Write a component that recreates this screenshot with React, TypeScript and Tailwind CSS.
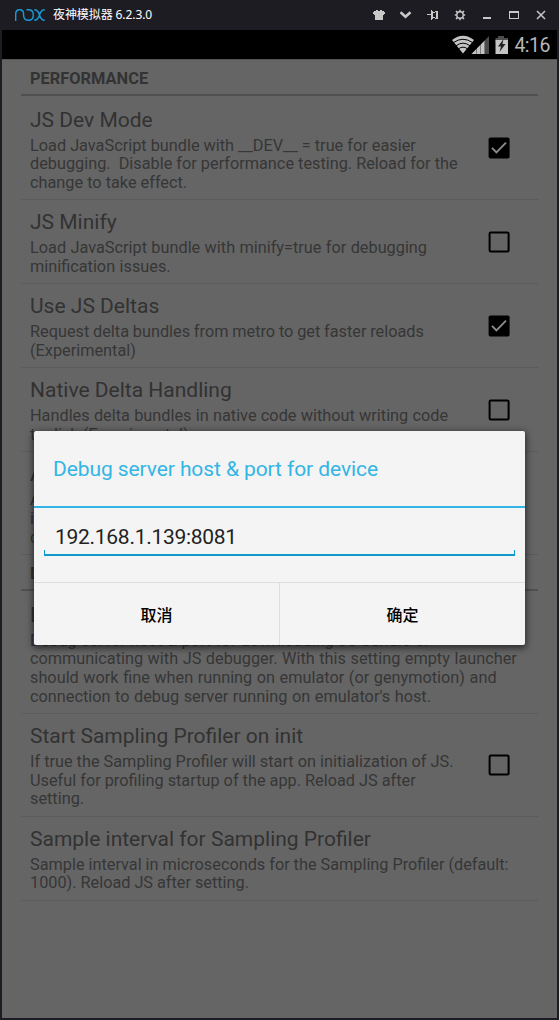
import React from "react";

type Item = {
  title: string;
  lines: string[];
  spacing?: string;
  checked?: boolean;
};

const performance: Item[] = [
  {
    title: "JS Dev Mode",
    lines: [
      "Load JavaScript bundle with __DEV__ = true for easier",
      "debugging.\u00a0 Disable for performance testing. Reload for the",
      "change to take effect.",
    ],
    checked: true,
  },
  {
    title: "JS Minify",
    lines: ["Load JavaScript bundle with minify=true for debugging", "minification issues."],
    spacing: "[word-spacing:0.35px]",
    checked: false,
  },
  {
    title: "Use JS Deltas",
    lines: ["Request delta bundles from metro to get faster reloads", "(Experimental)"],
    spacing: "[word-spacing:-0.25px]",
    checked: true,
  },
  {
    title: "Native Delta Handling",
    lines: ["Handles delta bundles in native code without writing code", "to disk (Experimental)"],
    spacing: "[word-spacing:0.25px]",
    checked: false,
  },
  {
    title: "A",
    lines: ["A", "i", "c"],
  },
];

const debugging: Item[] = [
  {
    title: "Debug server host & port for device",
    lines: [
      "Debug server host & port for downloading JS bundle or",
      "communicating with JS debugger. With this setting empty launcher",
      "should work fine when running on emulator (or genymotion) and",
      "connection to debug server running on emulator's host.",
    ],
    spacing: "[word-spacing:0.5px]",
  },
  {
    title: "Start Sampling Profiler on init",
    lines: [
      "If true the Sampling Profiler will start on initialization of JS.",
      "Useful for profiling startup of the app. Reload JS after",
      "setting.",
    ],
    checked: false,
  },
  {
    title: "Sample interval for Sampling Profiler",
    lines: [
      "Sample interval in microseconds for the Sampling Profiler (default:",
      "1000). Reload JS after setting.",
    ],
    spacing: "[word-spacing:-0.1px]",
  },
];

function CheckBox({ checked }: { checked: boolean }) {
  return (
    <svg width="22" height="22" viewBox="0 0 22 22" className="shrink-0">
      {checked ? (
        <>
          <rect x="0.6" y="0.4" width="21" height="21.2" rx="1.8" fill="#000" />
          <path d="M4 10.8l4.4 4.5L18 5.6" fill="none" stroke="#8b8b8b" strokeWidth="1.9" />
        </>
      ) : (
        <rect x="1.6" y="1.5" width="19" height="19" rx="1.2" fill="none" stroke="#000" strokeWidth="2" />
      )}
    </svg>
  );
}

function Category({ children }: { children: React.ReactNode }) {
  return (
    <div className="mb-[1.6px] flex h-[36px] items-center border-b-2 border-[#505050] pt-[3px] pl-[9px] text-[16.4px] font-bold leading-[19px] text-[#333333]">
      {children}
    </div>
  );
}

function Row({ item }: { item: Item }) {
  return (
    <div className="flex items-center justify-between border-b border-[#5b5b5b] pr-[28px] pl-[9px]">
      <div className="pt-[10px] pb-[6.6px]">
        <div className="text-[21px] leading-[25px] whitespace-nowrap text-[#323232]">{item.title}</div>
        <div
          className={`pt-[4px] text-[16.3px] leading-[18.7px] whitespace-nowrap text-[#363636] ${item.spacing ?? ""}`}
        >
          {item.lines.map((line) => (
            <div key={line}>{line}</div>
          ))}
        </div>
      </div>
      {item.checked !== undefined && <CheckBox checked={item.checked} />}
    </div>
  );
}

function TitleBar() {
  return (
    <header className="flex h-[30px] shrink-0 items-center bg-[#1e1c23] pr-[12px] pl-[15px]">
      <svg width="30" height="12" viewBox="0 0 30 12" fill="none" stroke="#1a9bd8" strokeWidth="1.4">
        <path d="M.7 12V5C.7 2 2 .7 4.6.7S8.600 2 8.600 5v2.200" />
        <path d="M8.600 7.200c.4 2.600 2.200 4.100 4.800 4.100 3.200 0 4.900-2.200 4.900-5.300S16.400.7 13.600.7H11.500" />
        <path d="M19.300.7c3.300 0 4.300 2.100 5.200 5.300s1.700 5.300 5.200 5.300M29.700.7c-3.300 0-4.300 2.100-5.200 5.300s-1.700 5.300-5.200 5.300" />
      </svg>
      <div className="ml-[8px] font-['Noto_Sans','Noto_Sans_CJK_SC',sans-serif] text-[12px] leading-[16px] tracking-[-0.09px] text-white">
        夜神模拟器 6.2.3.0
      </div>
      <div className="ml-auto flex items-center gap-[15px] text-[#c8c8c8]">
        <svg width="12" height="12" viewBox="0 0 12 12" fill="currentColor" shapeRendering="crispEdges">
          <path d="M3 1h2v1h2V1h2v1h2v1h1v2h-1v1h-1v5H2V6H1V5H0V3h1V2h2z" />
        </svg>
        <svg width="12" height="12" viewBox="0 0 12 12" fill="none" stroke="currentColor" strokeWidth="2.600">
          <path d="M.5 3.200l5 4.500 5-4.500" />
        </svg>
        <svg width="12" height="12" viewBox="0 0 12 12" fill="currentColor" shapeRendering="crispEdges">
          <path fillRule="evenodd" d="M0 5h4V1h1v1h1v1h2V2h3v8H8V9H6v1H5v1H4V6H0zM6 4v4h2v1h1V3H8v1z" />
        </svg>
        <svg width="12" height="12" viewBox="0 0 12 12" fill="none" stroke="currentColor">
          <circle cx="6" cy="6" r="3.200" strokeWidth="1.400" />
          <path
            d="M6 .8v2M6 9.200v2M.8 6h2M9.200 6h2M2 2l1.600 1.600M8.400 8.400L10 10M10 2L8.400 3.600M3.600 8.400L2 10"
            strokeWidth="1.500"
          />
        </svg>
        <svg width="12" height="12" viewBox="0 0 12 12" fill="currentColor">
          <path d="M2 8h8v2H2z" />
        </svg>
        <svg width="12" height="12" viewBox="0 0 12 12" fill="currentColor">
          <path fillRule="evenodd" d="M1 2h10v8H1zM2 4v5h8V4z" />
        </svg>
        <svg width="12" height="12" viewBox="0 0 12 12" fill="none" stroke="currentColor" strokeWidth="1.500">
          <path d="M2 2l8 8M10 2l-8 8" />
        </svg>
      </div>
    </header>
  );
}

function StatusBar() {
  return (
    <div className="flex h-[29px] shrink-0 items-center justify-end bg-black pr-[7px]">
      <svg width="57" height="20" viewBox="0 0 57 20">
        <path d="M0 5Q11 -3.500 22 5L11 18.500z" fill="#c4c4c4" />
        <path
          d="M1.500 7.500Q11 1 20.500 7.500M4 10.800Q11 5.500 18 10.800M6.500 13.800Q11 10.500 15.500 13.800"
          fill="none"
          stroke="#000"
          strokeWidth="1"
        />
        <path d="M37 1v18H19.500z" fill="#4a4a4a" />
        <path d="M33 5.200V19H19.500z" fill="#c4c4c4" />
        <path d="M24.500 12v7M28.500 8v11M32.500 4v15" stroke="#000" strokeOpacity=".45" strokeWidth=".8" />
        <path d="M46 1h6v2h4v4H43.500V3H46z" fill="#4e4e4e" />
        <path d="M43.500 5H56v14H43.500z" fill="#c4c4c4" />
        <path d="M51.500 4l-5.500 7.500h3L47.500 17l6-8h-3z" fill="#222" />
      </svg>
      <span className="ml-[5px] pt-[2px] text-[19.500px] leading-[24px] tracking-[-0.5px] text-[#b8b8b8]">4:16</span>
    </div>
  );
}

function HostDialog() {
  return (
    <div
      role="dialog"
      className="absolute top-[431px] left-[34px] flex h-[214px] w-[491px] flex-col rounded-[2px] bg-[#f4f4f4] shadow-[0_2px_7px_1px_rgba(0,0,0,0.6)]"
    >
      <h1 className="flex h-[77px] items-center border-b-[2.500px] border-[#33b5e5] pt-[2px] pl-[19px] text-[21px] leading-[25px] tracking-[-0.09px] whitespace-nowrap text-[#33b5e5]">
        Debug server host &amp; port for device
      </h1>
      <div className="flex h-[74px] flex-col px-[10px] pt-[17px]">
        <div className="pl-[11px] text-[21px] leading-[24px] tracking-[-0.28px] text-[#222]">192.168.1.139:8081</div>
        <div className="flex h-[7px] flex-col justify-end">
          <div className="h-[6px] border-x-[1.500px] border-b-2 border-[#1299cb]" />
        </div>
      </div>
      <div className="flex grow border-t border-[#dedede] text-[16px] leading-[20px] font-medium text-black">
        <button className="w-[246px] border-r border-[#dedede] pt-[3px]">取消</button>
        <button className="grow pt-[3px]">确定</button>
      </div>
    </div>
  );
}

export default function App() {
  return (
    <div className="relative flex h-[1020px] w-[559px] flex-col overflow-hidden bg-[#1e1c23] font-['Roboto','Noto_Sans_CJK_SC',sans-serif]">
      <TitleBar />
      <main className="mx-[2px] mb-[2px] flex grow flex-col bg-[#656565]">
        <StatusBar />
        <div className="grow border-t border-[#545454] pr-[19px] pl-[19px]">
          <Category>PERFORMANCE</Category>
          {performance.map((item) => (
            <Row key={item.title} item={item} />
          ))}
          <Category>DEBUGGING</Category>
          {debugging.map((item) => (
            <Row key={item.title} item={item} />
          ))}
        </div>
      </main>
      <HostDialog />
    </div>
  );
}
